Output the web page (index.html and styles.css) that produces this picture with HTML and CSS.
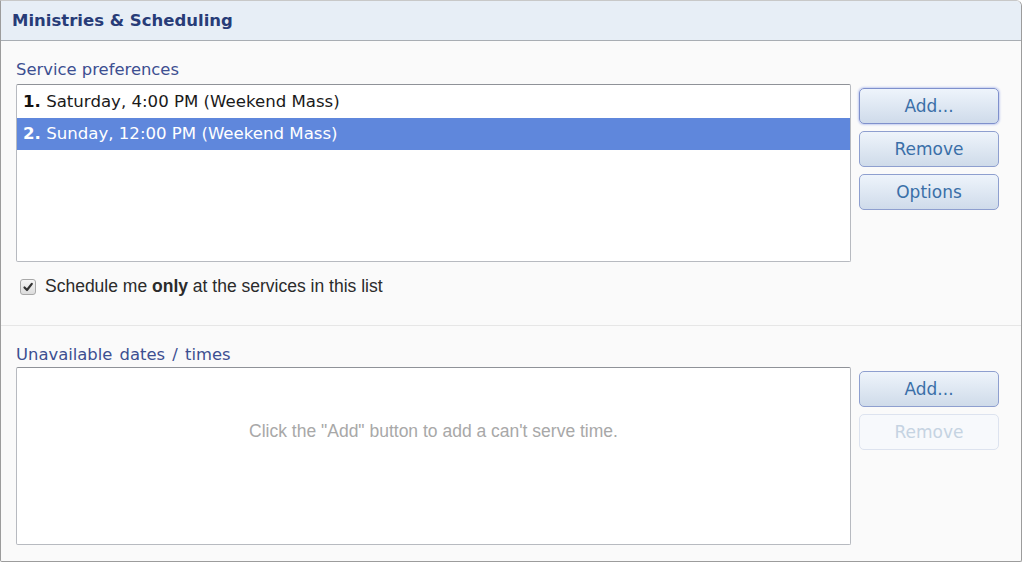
FILE: index.html
```html
<!DOCTYPE html>
<html lang="en">
<head>
<meta charset="utf-8">
<title>Ministries &amp; Scheduling</title>
<link rel="stylesheet" href="styles.css">
</head>
<body>
<div class="panel">
  <div class="panel-header">Ministries &amp; Scheduling</div>
  <div class="panel-body">
    <section class="group group-top">
      <div class="group-label">Service preferences</div>
      <div class="group-row">
        <ul class="listbox">
          <li class="item"><b>1.</b> Saturday, 4:00 PM (Weekend Mass)</li>
          <li class="item selected"><b>2.</b> Sunday, 12:00 PM (Weekend Mass)</li>
        </ul>
        <div class="buttons">
          <button class="btn focused">Add...</button>
          <button class="btn">Remove</button>
          <button class="btn">Options</button>
        </div>
      </div>
      <label class="check">
        <span class="box"><svg viewBox="0 0 12 12" width="12" height="12"><path d="M2.5 6.5 L5 9 L9.8 2.8" fill="none" stroke="#333" stroke-width="2.2" stroke-linecap="round" stroke-linejoin="round"/></svg></span>
        <span>Schedule me <b>only</b> at the services in this list</span>
      </label>
    </section>
    <section class="group group-bottom">
      <div class="group-label">Unavailable dates / times</div>
      <div class="group-row">
        <div class="listbox empty">Click the "Add" button to add a can't serve time.</div>
        <div class="buttons">
          <button class="btn">Add...</button>
          <button class="btn" disabled>Remove</button>
        </div>
      </div>
    </section>
  </div>
</div>
</body>
</html>
```

FILE: styles.css
```css
html, body {
  margin: 0;
  padding: 0;
  background: #ffffff;
}

body {
  font-family: "DejaVu Sans", Tahoma, sans-serif;
}

.panel {
  width: 1020px;
  height: 560px;
  border: 1px solid #9c9c9c;
  border-top-color: #c8c8c8;
  border-radius: 0 6px 2px 2px;
  background: #fafafa;
  display: flex;
  flex-direction: column;
  overflow: hidden;
}

.panel-header {
  height: 40px;
  box-sizing: border-box;
  background: #e7eef6;
  border-bottom: 1px solid #a8adb3;
  color: #283c78;
  font-weight: bold;
  font-size: 16.5px;
  line-height: 39px;
  padding-left: 11px;
}

.panel-body {
  flex: 1;
  display: flex;
  flex-direction: column;
}

.group {
  padding: 0 15px;
}

.group-top {
  padding-top: 20px;
  height: 285px;
  box-sizing: border-box;
  border-bottom: 1px solid #e6e6e6;
}

.group-bottom {
  padding-top: 20px;
}

.group-label {
  color: #3d4f91;
  font-size: 16.4px;
  line-height: 18px;
  margin-bottom: 5px;
}

.group-bottom .group-label {
  word-spacing: 2px;
  margin-bottom: 3px;
}

.group-row {
  display: flex;
  gap: 8px;
  align-items: flex-start;
}

.listbox {
  width: 835px;
  height: 178px;
  box-sizing: border-box;
  margin: 0;
  padding: 1px 0 0;
  list-style: none;
  background: #ffffff;
  border: 1px solid #b7bac0;
  border-top-color: #8f9298;
  border-radius: 2px;
}

.item {
  height: 32px;
  line-height: 31px;
  padding-left: 6px;
  font-size: 16.6px;
  color: #1a1a1a;
}

.item b {
  color: #111;
}

.item.selected {
  background: #5f87dc;
  color: #ffffff;
}

.item.selected b {
  color: #ffffff;
}

.empty {
  display: flex;
  align-items: center;
  justify-content: center;
  padding-bottom: 50px;
  font-family: "Liberation Sans", Arial, sans-serif;
  font-size: 17.5px;
  color: #a8a8a8;
}

.buttons {
  display: flex;
  flex-direction: column;
  gap: 7px;
  padding-top: 4px;
}

.btn {
  width: 140px;
  height: 36px;
  box-sizing: border-box;
  border: 1px solid #8e9fcf;
  border-radius: 5px;
  background: linear-gradient(#eef4fb, #cfdbea);
  color: #3a6fa8;
  font-family: "DejaVu Sans", Tahoma, sans-serif;
  font-size: 17px;
  padding: 0;
  cursor: pointer;
}

.btn.focused {
  border-color: #7f90cc;
  box-shadow: 0 0 2px 1px #c4cdf0;
}

.btn:disabled {
  background: #f7f9fc;
  border-color: #dde3ef;
  color: #c5d3e2;
  cursor: default;
}

.check {
  display: flex;
  align-items: center;
  gap: 9px;
  margin-top: 14px;
  margin-left: 4px;
  font-family: "Liberation Sans", Arial, sans-serif;
  font-size: 17.5px;
  color: #2b2b2b;
}

.check .box {
  width: 14px;
  height: 14px;
  border: 1px solid #a8a8a8;
  border-radius: 3px;
  background: linear-gradient(#f6f6f6, #dcdcdc);
  display: flex;
  align-items: center;
  justify-content: center;
}
```
